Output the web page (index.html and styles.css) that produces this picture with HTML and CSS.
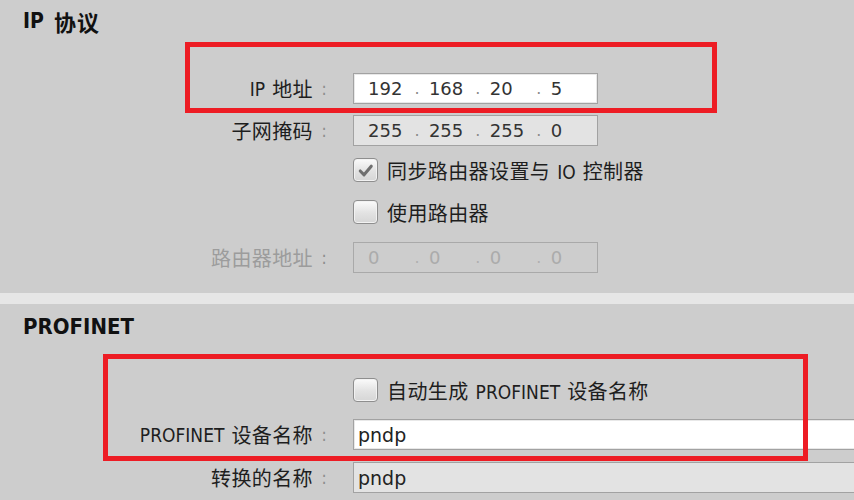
FILE: index.html
```html
<!DOCTYPE html>
<html lang="zh-CN">
<head>
<meta charset="utf-8">
<title>IP 协议 / PROFINET</title>
<link rel="stylesheet" href="styles.css">
</head>
<body>
<div class="page">
  <section class="sec sec-ip">
    <h2 class="title"><span class="lat">IP</span>协议</h2>

    <div class="row">
      <div class="label"><span class="lat">IP</span>地址<span class="colon">:</span></div>
      <div class="input addr white">
        <span class="seg">192</span><span class="dot">.</span><span class="seg">168</span><span class="dot">.</span><span class="seg">20</span><span class="dot">.</span><span class="seg">5</span>
      </div>
    </div>

    <div class="row">
      <div class="label">子网掩码<span class="colon">:</span></div>
      <div class="input addr grey">
        <span class="seg">255</span><span class="dot">.</span><span class="seg">255</span><span class="dot">.</span><span class="seg">255</span><span class="dot">.</span><span class="seg">0</span>
      </div>
    </div>

    <div class="row check first">
      <div class="label"></div>
      <div class="cb checked"><svg viewBox="0 0 24 24" width="24" height="23"><path d="M6.5 12.5 L10.5 16.5 L18 7.5" fill="none" stroke="#6f6f6f" stroke-width="3.2" stroke-linecap="round" stroke-linejoin="round"/></svg></div>
      <div class="cb-text">同步路由器设置与<span class="lat">IO</span>控制器</div>
    </div>

    <div class="row check second">
      <div class="label"></div>
      <div class="cb"></div>
      <div class="cb-text">使用路由器</div>
    </div>

    <div class="row disabled">
      <div class="label">路由器地址<span class="colon">:</span></div>
      <div class="input addr off">
        <span class="seg">0</span><span class="dot">.</span><span class="seg">0</span><span class="dot">.</span><span class="seg">0</span><span class="dot">.</span><span class="seg">0</span>
      </div>
    </div>
  </section>

  <div class="band"></div>

  <section class="sec sec-pn">
    <h2 class="title title-pn">PROFINET</h2>

    <div class="row check pn-check">
      <div class="label"></div>
      <div class="cb"></div>
      <div class="cb-text">自动生成<span class="lat">PROFINET</span>设备名称</div>
    </div>

    <div class="row pn-name">
      <div class="label"><span class="lat">PROFINET</span>设备名称<span class="colon">:</span></div>
      <div class="input wide white"><span class="txt">pndp</span></div>
    </div>

    <div class="row pn-conv">
      <div class="label">转换的名称<span class="colon">:</span></div>
      <div class="input wide grey"><span class="txt">pndp</span></div>
    </div>
  </section>

  <div class="mark mark-ip"></div>
  <div class="mark mark-pn"></div>
</div>
</body>
</html>
```

FILE: styles.css
```css
html, body {
  margin: 0;
  padding: 0;
}

body {
  background: #cdcdcd;
  font-family: "DejaVu Sans Condensed", "DejaVu Sans", "Noto Sans CJK SC", sans-serif;
  font-stretch: condensed;
  color: #1e1e1e;
}

.page {
  position: relative;
  width: 854px;
  height: 500px;
  overflow: hidden;
  background: #cdcdcd;
}

.sec-ip {
  padding-bottom: 20px;
}

.title {
  margin: 0;
  height: 42px;
  display: flex;
  align-items: center;
  padding-left: 23px;
  font-size: 22px;
  font-weight: bold;
  color: #111;
  letter-spacing: 1px;
}

.title .lat {
  font-size: 21px;
  margin-right: 10px;
  letter-spacing: 0;
}

.title-pn {
  height: 44px;
  font-size: 22px;
  letter-spacing: 0;
}

.row {
  display: flex;
  align-items: center;
  height: 31px;
  margin-top: 11px;
}

.sec-ip .row:first-of-type {
  margin-top: 31px;
}

.row.check {
  height: 24px;
}

.row.check.first {
  margin-top: 12px;
}

.row.check.second {
  margin-top: 18px;
}

.row.disabled {
  margin-top: 18px;
}

.label {
  width: 335px;
  flex: none;
  margin-right: 18px;
  display: flex;
  justify-content: flex-end;
  align-items: center;
  font-size: 20px;
  letter-spacing: 0.4px;
  white-space: nowrap;
}

.lat {
  font-size: 19px;
  letter-spacing: 0;
  margin-right: 7px;
}

.cb-text .lat {
  margin-left: 7px;
}

.colon {
  display: inline-block;
  width: 22px;
  text-align: center;
  color: #8c8c8c;
  font-size: 17px;
  letter-spacing: 0;
}

.disabled .label {
  color: #9c9c9c;
}

.input {
  box-sizing: border-box;
  height: 31px;
  border: 1px solid #a2a2a2;
  display: flex;
  align-items: center;
  font-family: "DejaVu Sans", sans-serif;
  font-stretch: normal;
  font-size: 18px;
  color: #333333;
  white-space: nowrap;
}

.input.white {
  background: #ffffff;
  box-shadow: inset 0 0 0 1px #e8e8e8;
}

.input.grey {
  background: #e3e3e3;
}

.input.off {
  background: #cdcdcd;
  border-color: #a9a9a9;
  color: #ababab;
}

.addr {
  width: 245px;
  padding-left: 14px;
}

.seg {
  display: inline-block;
  width: 48px;
}

.dot {
  display: inline-block;
  width: 15px;
  color: #8a8a8a;
  font-size: 16px;
}

.off .dot {
  color: #b0b0b0;
}

.wide {
  flex: none;
  width: 540px;
  padding-left: 4px;
  font-size: 19px;
  color: #222222;
}

.sec-pn .row.pn-check {
  margin-top: 30px;
}

.sec-pn .row.pn-name {
  margin-top: 17px;
}

.sec-pn .row.pn-conv {
  margin-top: 12px;
}

.cb {
  box-sizing: border-box;
  width: 25px;
  height: 24px;
  flex: none;
  border: 1px solid #8e8e8e;
  border-radius: 4px;
  background: linear-gradient(#fbfbfb, #e2e2e2 55%, #d6d6d6);
  box-shadow: inset 0 0 0 1px #f2f2f2;
  display: flex;
  align-items: center;
  justify-content: center;
}

.cb svg {
  display: block;
}

.cb-text {
  margin-left: 9px;
  font-size: 20px;
  letter-spacing: 0.4px;
  white-space: nowrap;
}

.band {
  height: 11px;
  background: #e6e6e6;
}

.mark {
  position: absolute;
  box-sizing: border-box;
  border: 5px solid #ed1c24;
}

.mark-ip {
  left: 185px;
  top: 42px;
  width: 532px;
  height: 71px;
}

.mark-pn {
  left: 103px;
  top: 354px;
  width: 705px;
  height: 107px;
}
```
